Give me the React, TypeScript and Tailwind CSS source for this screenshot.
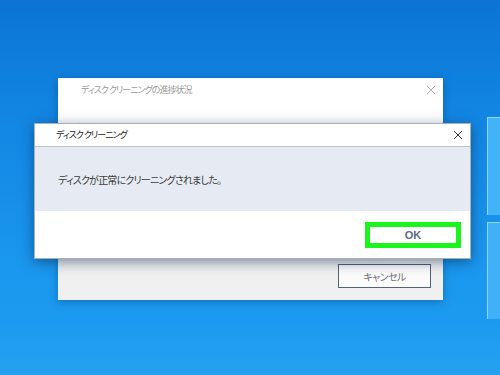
export default function App() {
  const jp = "font-['Noto_Sans_CJK_JP',sans-serif] [font-feature-settings:'palt']";

  return (
    <div className="relative w-[500px] h-[375px] overflow-hidden bg-[linear-gradient(180deg,#0b74d4_0%,#1388e4_35%,#1a97ee_70%,#1d9df1_100%)]">
      {/* windows logo panes */}
      <div className="absolute left-[487px] top-[117px] w-[20px] h-[98px] bg-[#43b3f8] border-l border-t border-[#92d8ff]" />
      <div className="absolute left-[487px] top-[222px] w-[20px] h-[97px] bg-[#40b0f7] border-l border-t border-[#92d8ff]" />
      <div className="absolute left-0 top-[318px] w-[500px] h-[57px] bg-[linear-gradient(180deg,rgba(255,255,255,0),rgba(255,255,255,0.04))]" />

      {/* progress window (behind) */}
      <div className="absolute left-[58px] top-[78px] w-[385px] h-[222px] flex flex-col bg-white shadow-[0_2px_8px_rgba(0,40,90,0.35)]">
        <div className="h-[23px] flex items-center justify-between pl-[23px] pr-[6px]">
          <span className={`${jp} text-[9px] text-[#9a9a9a] tracking-[-1px]`}>
            ディスク クリーニングの進捗状況
          </span>
          <svg width="10" height="10" viewBox="0 0 10 10" className="mr-[1px]">
            <path d="M1 1 L9 9 M9 1 L1 9" stroke="#b4b4b4" strokeWidth="1" />
          </svg>
        </div>
        <div className="h-[149px] pl-[12px] pt-[13px]">
          <span className={`${jp} text-[10.5px] text-[#1a1a1a] tracking-[-0.6px]`}>ディスク クリーンアップは以下を</span>
        </div>
        <div className="flex-1 bg-[#f0f0f0] flex items-start justify-end pr-[12px] pt-[14px]">
          <div className="w-[93px] h-[24px] border border-[#55617a] bg-[#fbfbfb] flex items-center justify-center">
            <span className={`${jp} text-[10px] text-[#707070] tracking-[-0.6px]`}>キャンセル</span>
          </div>
        </div>
      </div>

      {/* completion dialog (front) */}
      <div className="absolute left-[34px] top-[123px] w-[437px] h-[136px] flex flex-col bg-white border border-[#a9b0b9] shadow-[0_3px_12px_rgba(0,30,70,0.5)]">
        <div className="h-[23px] flex items-center justify-between pl-[21px] pr-[7px] border-b border-[#bcc3cc]">
          <span className={`${jp} text-[9px] text-[#222] tracking-[-1px]`}>ディスク クリーニング</span>
          <svg width="10" height="10" viewBox="0 0 10 10">
            <path d="M1 1 L9 9 M9 1 L1 9" stroke="#333" strokeWidth="1" />
          </svg>
        </div>
        <div className="h-[64px] bg-[#e6ebf3] flex items-center pl-[23px]">
          <span className={`${jp} text-[10px] text-[#3a3a3a] tracking-[-0.8px]`}>
            ディスクが正常にクリーニングされました。
          </span>
        </div>
        <div className="flex-1 flex items-start justify-end pr-[9px] pt-[11px]">
          <div className="w-[96px] h-[26px] border-[5px] border-[#19f51d] bg-white flex items-center justify-center">
            <span className="font-['Liberation_Sans',sans-serif] text-[11px] font-bold text-[#5c6b82]">OK</span>
          </div>
        </div>
      </div>
    </div>
  );
}
